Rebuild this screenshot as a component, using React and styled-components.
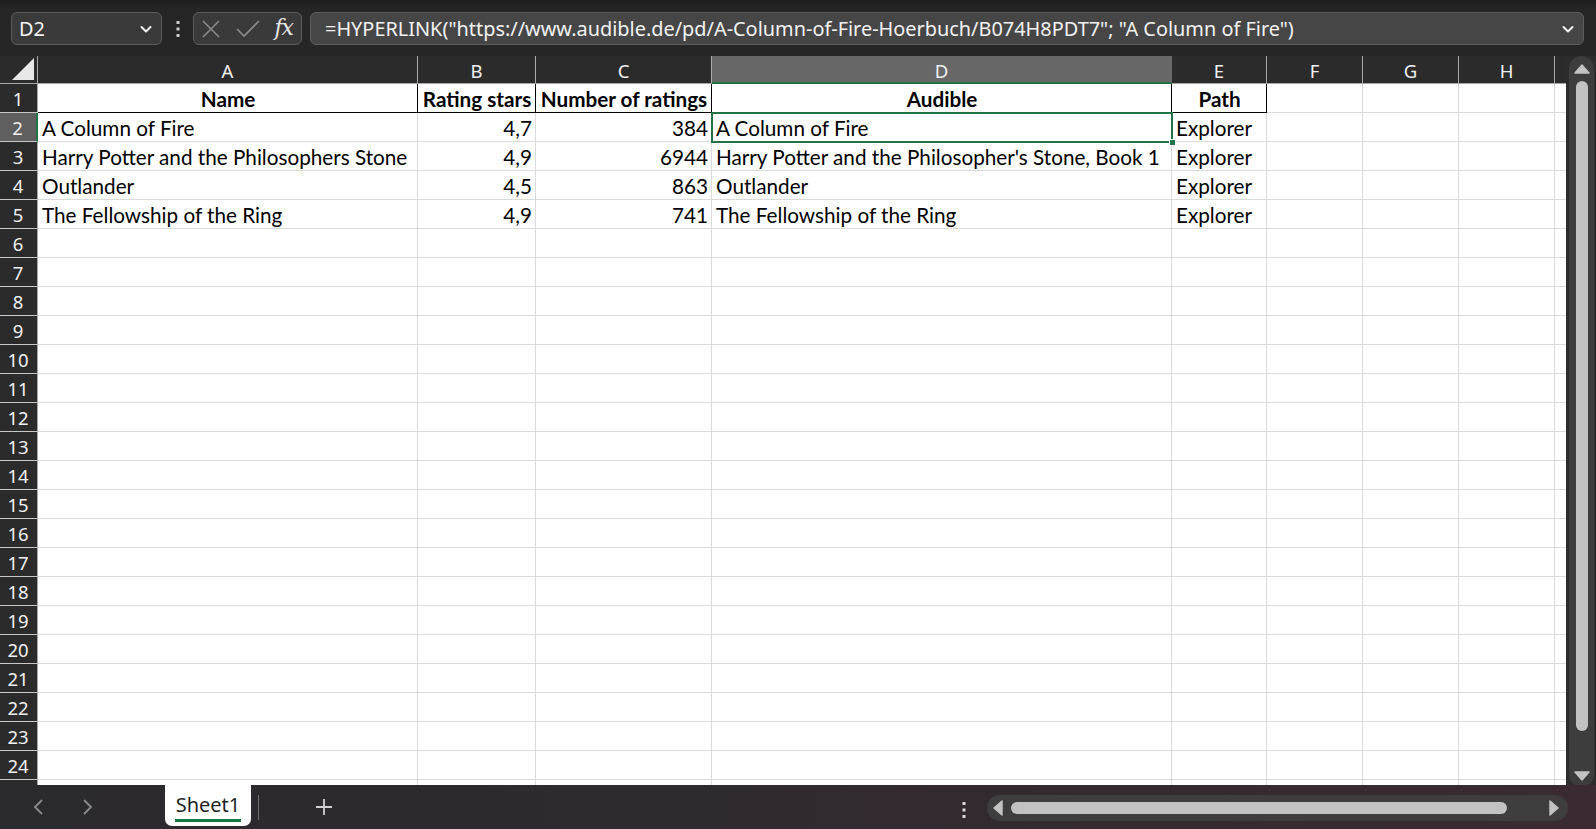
import React from "react";
import styled, { createGlobalStyle } from "styled-components";

const Global = createGlobalStyle`
  html, body { margin: 0; padding: 0; background: #252525; overflow: hidden; }
  #root { width: 1596px; height: 829px; }
  * { box-sizing: border-box; }
`;

const UI = `"Noto Sans", "Open Sans", sans-serif`;
const CELL = `"Lato", "Liberation Sans", sans-serif`;

const Page = styled.div`
  width: 1596px;
  height: 829px;
  display: flex;
  flex-direction: column;
  background: #252525;
  font-family: ${UI};
`;

const Toolbar = styled.div`
  height: 56px;
  flex: none;
  display: flex;
  align-items: flex-start;
  padding: 12px 12px 0 11px;
  background: linear-gradient(180deg, #1e1e1e 0px, #262626 10px, #262626 100%);
`;

const Box = styled.div`
  height: 33px;
  border: 1px solid #5c5c5c;
  border-radius: 6px;
  background: ${(p) => p.$bg || "#3a3a3a"};
  display: flex;
  align-items: center;
  color: #f2f2f2;
  font-size: 19.9px;
`;

const NameBox = styled(Box)`
  width: 151px;
  padding: 0 8px 0 7px;
  justify-content: space-between;
`;

const Kebab = styled.div`
  width: 31px;
  height: 33px;
  display: flex;
  align-items: center;
  justify-content: center;
`;

const FxBox = styled(Box)`
  width: 109px;
  padding: 0 8px 0 6px;
  justify-content: space-between;
  margin-right: 8px;
`;

const FxText = styled.span`
  font-family: "DejaVu Serif", "Liberation Serif", serif;
  font-style: italic;
  font-size: 22px;
  color: #e6e6e6;
  letter-spacing: -1px;
  margin-top: -3px;
`;

const FormulaBox = styled(Box)`
  flex: 1;
  background: #464646;
  padding: 0 8px 0 14px;
  justify-content: space-between;
`;

const FormulaText = styled.span`
  white-space: nowrap;
`;

const Main = styled.div`
  flex: 1;
  display: flex;
  min-height: 0;
  background: #2c2c2c;
`;

const Sheet = styled.div`
  width: 1566px;
  flex: none;
  overflow: hidden;
  position: relative;
  background: #fff;
`;

const Grid = styled.div`
  position: relative;
  display: grid;
  grid-template-columns: 38px 380px 118px 176px 460px 95px 96px 96px 96px 60px;
  grid-template-rows: 28px;
  grid-auto-rows: 29px;
`;

const Corner = styled.div`
  background: #2b2b2b;
  border-right: 1px solid #a8a8a8;
  border-bottom: 1px solid #a8a8a8;
  display: flex;
  align-items: flex-end;
  justify-content: flex-end;
  padding: 0 3px 3px 0;
`;

const ColHead = styled.div`
  background: ${(p) => (p.$sel ? "#676767" : "#2b2b2b")};
  color: #f0f0f0;
  font-family: ${UI};
  font-size: 18.5px;
  display: flex;
  align-items: center;
  justify-content: center;
  border-right: 1px solid ${(p) => (p.$sel ? "#676767" : "#a8a8a8")};
  border-bottom: ${(p) => (p.$sel ? "2px solid #217346" : "1px solid #a8a8a8")};
  padding-top: 2px;
`;

const RowHead = styled.div`
  background: ${(p) => (p.$sel ? "#5f5f5f" : "#2b2b2b")};
  color: #f0f0f0;
  font-family: ${UI};
  font-size: 18.5px;
  display: flex;
  align-items: center;
  justify-content: center;
  padding-right: 1px;
  border-bottom: 1px solid #c9c9c9;
  border-right: ${(p) => (p.$sel ? "2px solid #217346" : "1px solid #a8a8a8")};
`;

const Cell = styled.div`
  font-family: ${CELL};
  font-size: 20.7px;
  color: #000;
  font-weight: ${(p) => (p.$bold ? 700 : 400)};
  display: flex;
  align-items: center;
  justify-content: ${(p) =>
    p.$align === "right" ? "flex-end" : p.$align === "center" ? "center" : "flex-start"};
  padding: 2px 3px 0 4px;
  white-space: nowrap;
  overflow: visible;
  border-right: 1px solid ${(p) => (p.$boxed ? "#000" : "#dadada")};
  border-bottom: 1px solid ${(p) => (p.$boxed ? "#000" : "#dadada")};
`;

const Selection = styled.div`
  position: absolute;
  left: 711px;
  top: 56px;
  width: 462px;
  height: 31px;
  border: 2px solid #217346;
  pointer-events: none;
`;

const Handle = styled.div`
  position: absolute;
  right: -5px;
  bottom: -5px;
  width: 7px;
  height: 7px;
  background: #217346;
  border: 1px solid #fff;
`;

const VScroll = styled.div`
  flex: 1;
  display: flex;
  justify-content: center;
  padding: 0 2px 0 3px;
  background: #2c2c2c;
`;

const VTrack = styled.div`
  width: 25px;
  height: 731px;
  border-radius: 13px;
  background: #3d3d3d;
  display: flex;
  flex-direction: column;
  align-items: center;
  padding: 8px 0 6px;
`;

const VThumb = styled.div`
  width: 12px;
  height: 650px;
  margin: 7px 0 auto;
  border-radius: 6px;
  background: #c2c2c2;
`;

const Bottom = styled.div`
  height: 44px;
  flex: none;
  display: flex;
  align-items: flex-start;
  background: linear-gradient(90deg, #2b2a2e 0%, #2e2a2f 40%, #3b2a31 100%);
`;

const NavArrows = styled.div`
  width: 165px;
  height: 44px;
  display: flex;
  align-items: center;
  padding-left: 31px;
  gap: 32px;
`;

const Tab = styled.div`
  width: 86px;
  height: 41px;
  background: #fff;
  border-radius: 0 0 7px 7px;
  display: flex;
  flex-direction: column;
  align-items: center;
  justify-content: center;
  padding-top: 1px;
  font-family: ${UI};
  font-size: 20px;
  color: #1f1f1f;
`;

const TabLabel = styled.span`
  line-height: 28px;
  border-bottom: 3px solid #107c41;
  padding: 0 1px;
`;

const TabSep = styled.div`
  width: 1px;
  height: 25px;
  background: #707070;
  margin: 10px 0 0 7px;
`;

const Plus = styled.div`
  width: 130px;
  height: 44px;
  display: flex;
  align-items: center;
  padding-left: 55px;
`;

const Spacer = styled.div`
  flex: 1;
`;

const Dots = styled.div`
  width: 46px;
  height: 44px;
  display: flex;
  align-items: center;
  justify-content: center;
  padding-top: 6px;
`;

const HTrack = styled.div`
  width: 581px;
  height: 26px;
  margin: 10px 28px 0 0;
  border-radius: 13px;
  background: #3e3e3e;
  display: flex;
  align-items: center;
  padding: 0 9px 0 6px;
`;

const HThumb = styled.div`
  width: 496px;
  height: 12px;
  margin-left: 8px;
  border-radius: 6px;
  background: #c2c2c2;
`;

const Chevron = ({ color = "#f0f0f0" }) => (
  <svg width="14" height="14" viewBox="0 0 14 14">
    <path d="M2.5 5 L7 9.5 L11.5 5" fill="none" stroke={color} strokeWidth="2" strokeLinecap="round" strokeLinejoin="round" />
  </svg>
);

const VDots = ({ color = "#d8d8d8" }) => (
  <svg width="6" height="18" viewBox="0 0 6 18">
    <rect x="1.5" y="1" width="3" height="3" fill={color} />
    <rect x="1.5" y="7.5" width="3" height="3" fill={color} />
    <rect x="1.5" y="14" width="3" height="3" fill={color} />
  </svg>
);

const cols = ["A", "B", "C", "D", "E", "F", "G", "H", "I"];

const data = [
  ["A Column of Fire", "4,7", "384", "A Column of Fire", "Explorer"],
  ["Harry Potter and the Philosophers Stone", "4,9", "6944", "Harry Potter and the Philosopher's Stone, Book 1", "Explorer"],
  ["Outlander", "4,5", "863", "Outlander", "Explorer"],
  ["The Fellowship of the Ring", "4,9", "741", "The Fellowship of the Ring", "Explorer"],
];

const headers = ["Name", "Rating stars", "Number of ratings", "Audible", "Path"];

export default function App() {
  const rows = [];
  for (let r = 1; r <= 25; r++) {
    rows.push(
      <RowHead key={`rh${r}`} $sel={r === 2}>
        {r <= 24 ? r : ""}
      </RowHead>
    );
    cols.forEach((c, ci) => {
      let content = "";
      let align = "left";
      let bold = false;
      let boxed = false;
      if (r === 1 && ci < 5) {
        content = headers[ci];
        align = "center";
        bold = true;
        boxed = true;
      } else if (r >= 2 && r <= 5 && ci < 5) {
        content = data[r - 2][ci];
        align = ci === 1 || ci === 2 ? "right" : "left";
      }
      rows.push(
        <Cell key={`c${r}${c}`} $align={align} $bold={bold} $boxed={boxed}>
          {content}
        </Cell>
      );
    });
  }

  return (
    <>
      <Global />
      <Page>
        <Toolbar>
          <NameBox>
            <span>D2</span>
            <Chevron />
          </NameBox>
          <Kebab>
            <VDots color="#cfcfcf" />
          </Kebab>
          <FxBox>
            <svg width="22" height="22" viewBox="0 0 22 22">
              <path d="M3 3 L19 19 M19 3 L3 19" stroke="#8c8c8c" strokeWidth="1.6" fill="none" />
            </svg>
            <svg width="26" height="22" viewBox="0 0 26 22">
              <path d="M2 11 L9 18 L24 3" stroke="#8c8c8c" strokeWidth="1.6" fill="none" />
            </svg>
            <FxText>fx</FxText>
          </FxBox>
          <FormulaBox>
            <FormulaText>
              =HYPERLINK("https://www.audible.de/pd/A-Column-of-Fire-Hoerbuch/B074H8PDT7"; "A Column of Fire")
            </FormulaText>
            <Chevron />
          </FormulaBox>
        </Toolbar>
        <Main>
          <Sheet>
            <Grid>
              <Corner>
                <svg width="22" height="22" viewBox="0 0 22 22">
                  <path d="M22 0 L22 22 L0 22 Z" fill="#e8e8e8" />
                </svg>
              </Corner>
              {cols.map((c) => (
                <ColHead key={c} $sel={c === "D"}>
                  {c === "I" ? "" : c}
                </ColHead>
              ))}
              {rows}
              <Selection>
                <Handle />
              </Selection>
            </Grid>
          </Sheet>
          <VScroll>
            <VTrack>
              <svg width="16" height="10" viewBox="0 0 16 10">
                <path d="M8 1 L15 9 L1 9 Z" fill="#c2c2c2" strokeLinejoin="round" stroke="#c2c2c2" strokeWidth="1.5" />
              </svg>
              <VThumb />
              <svg width="16" height="10" viewBox="0 0 16 10">
                <path d="M1 1 L15 1 L8 9 Z" fill="#c2c2c2" strokeLinejoin="round" stroke="#c2c2c2" strokeWidth="1.5" />
              </svg>
            </VTrack>
          </VScroll>
        </Main>
        <Bottom>
          <NavArrows>
            <svg width="16" height="20" viewBox="0 0 16 20">
              <path d="M11 3 L4 10 L11 17" stroke="#8a8a8a" strokeWidth="1.8" fill="none" />
            </svg>
            <svg width="16" height="20" viewBox="0 0 16 20">
              <path d="M5 3 L12 10 L5 17" stroke="#8a8a8a" strokeWidth="1.8" fill="none" />
            </svg>
          </NavArrows>
          <Tab>
            <TabLabel>Sheet1</TabLabel>
          </Tab>
          <TabSep />
          <Plus>
            <svg width="20" height="20" viewBox="0 0 20 20">
              <path d="M10 2 L10 18 M2 10 L18 10" stroke="#d0d0d0" strokeWidth="1.8" />
            </svg>
          </Plus>
          <Spacer />
          <Dots>
            <VDots color="#d8d8d8" />
          </Dots>
          <HTrack>
            <svg width="10" height="16" viewBox="0 0 10 16">
              <path d="M1 8 L9 1 L9 15 Z" fill="#c2c2c2" stroke="#c2c2c2" strokeWidth="1.5" strokeLinejoin="round" />
            </svg>
            <HThumb />
            <Spacer />
            <svg width="10" height="16" viewBox="0 0 10 16">
              <path d="M9 8 L1 1 L1 15 Z" fill="#c2c2c2" stroke="#c2c2c2" strokeWidth="1.5" strokeLinejoin="round" />
            </svg>
          </HTrack>
        </Bottom>
      </Page>
    </>
  );
}
